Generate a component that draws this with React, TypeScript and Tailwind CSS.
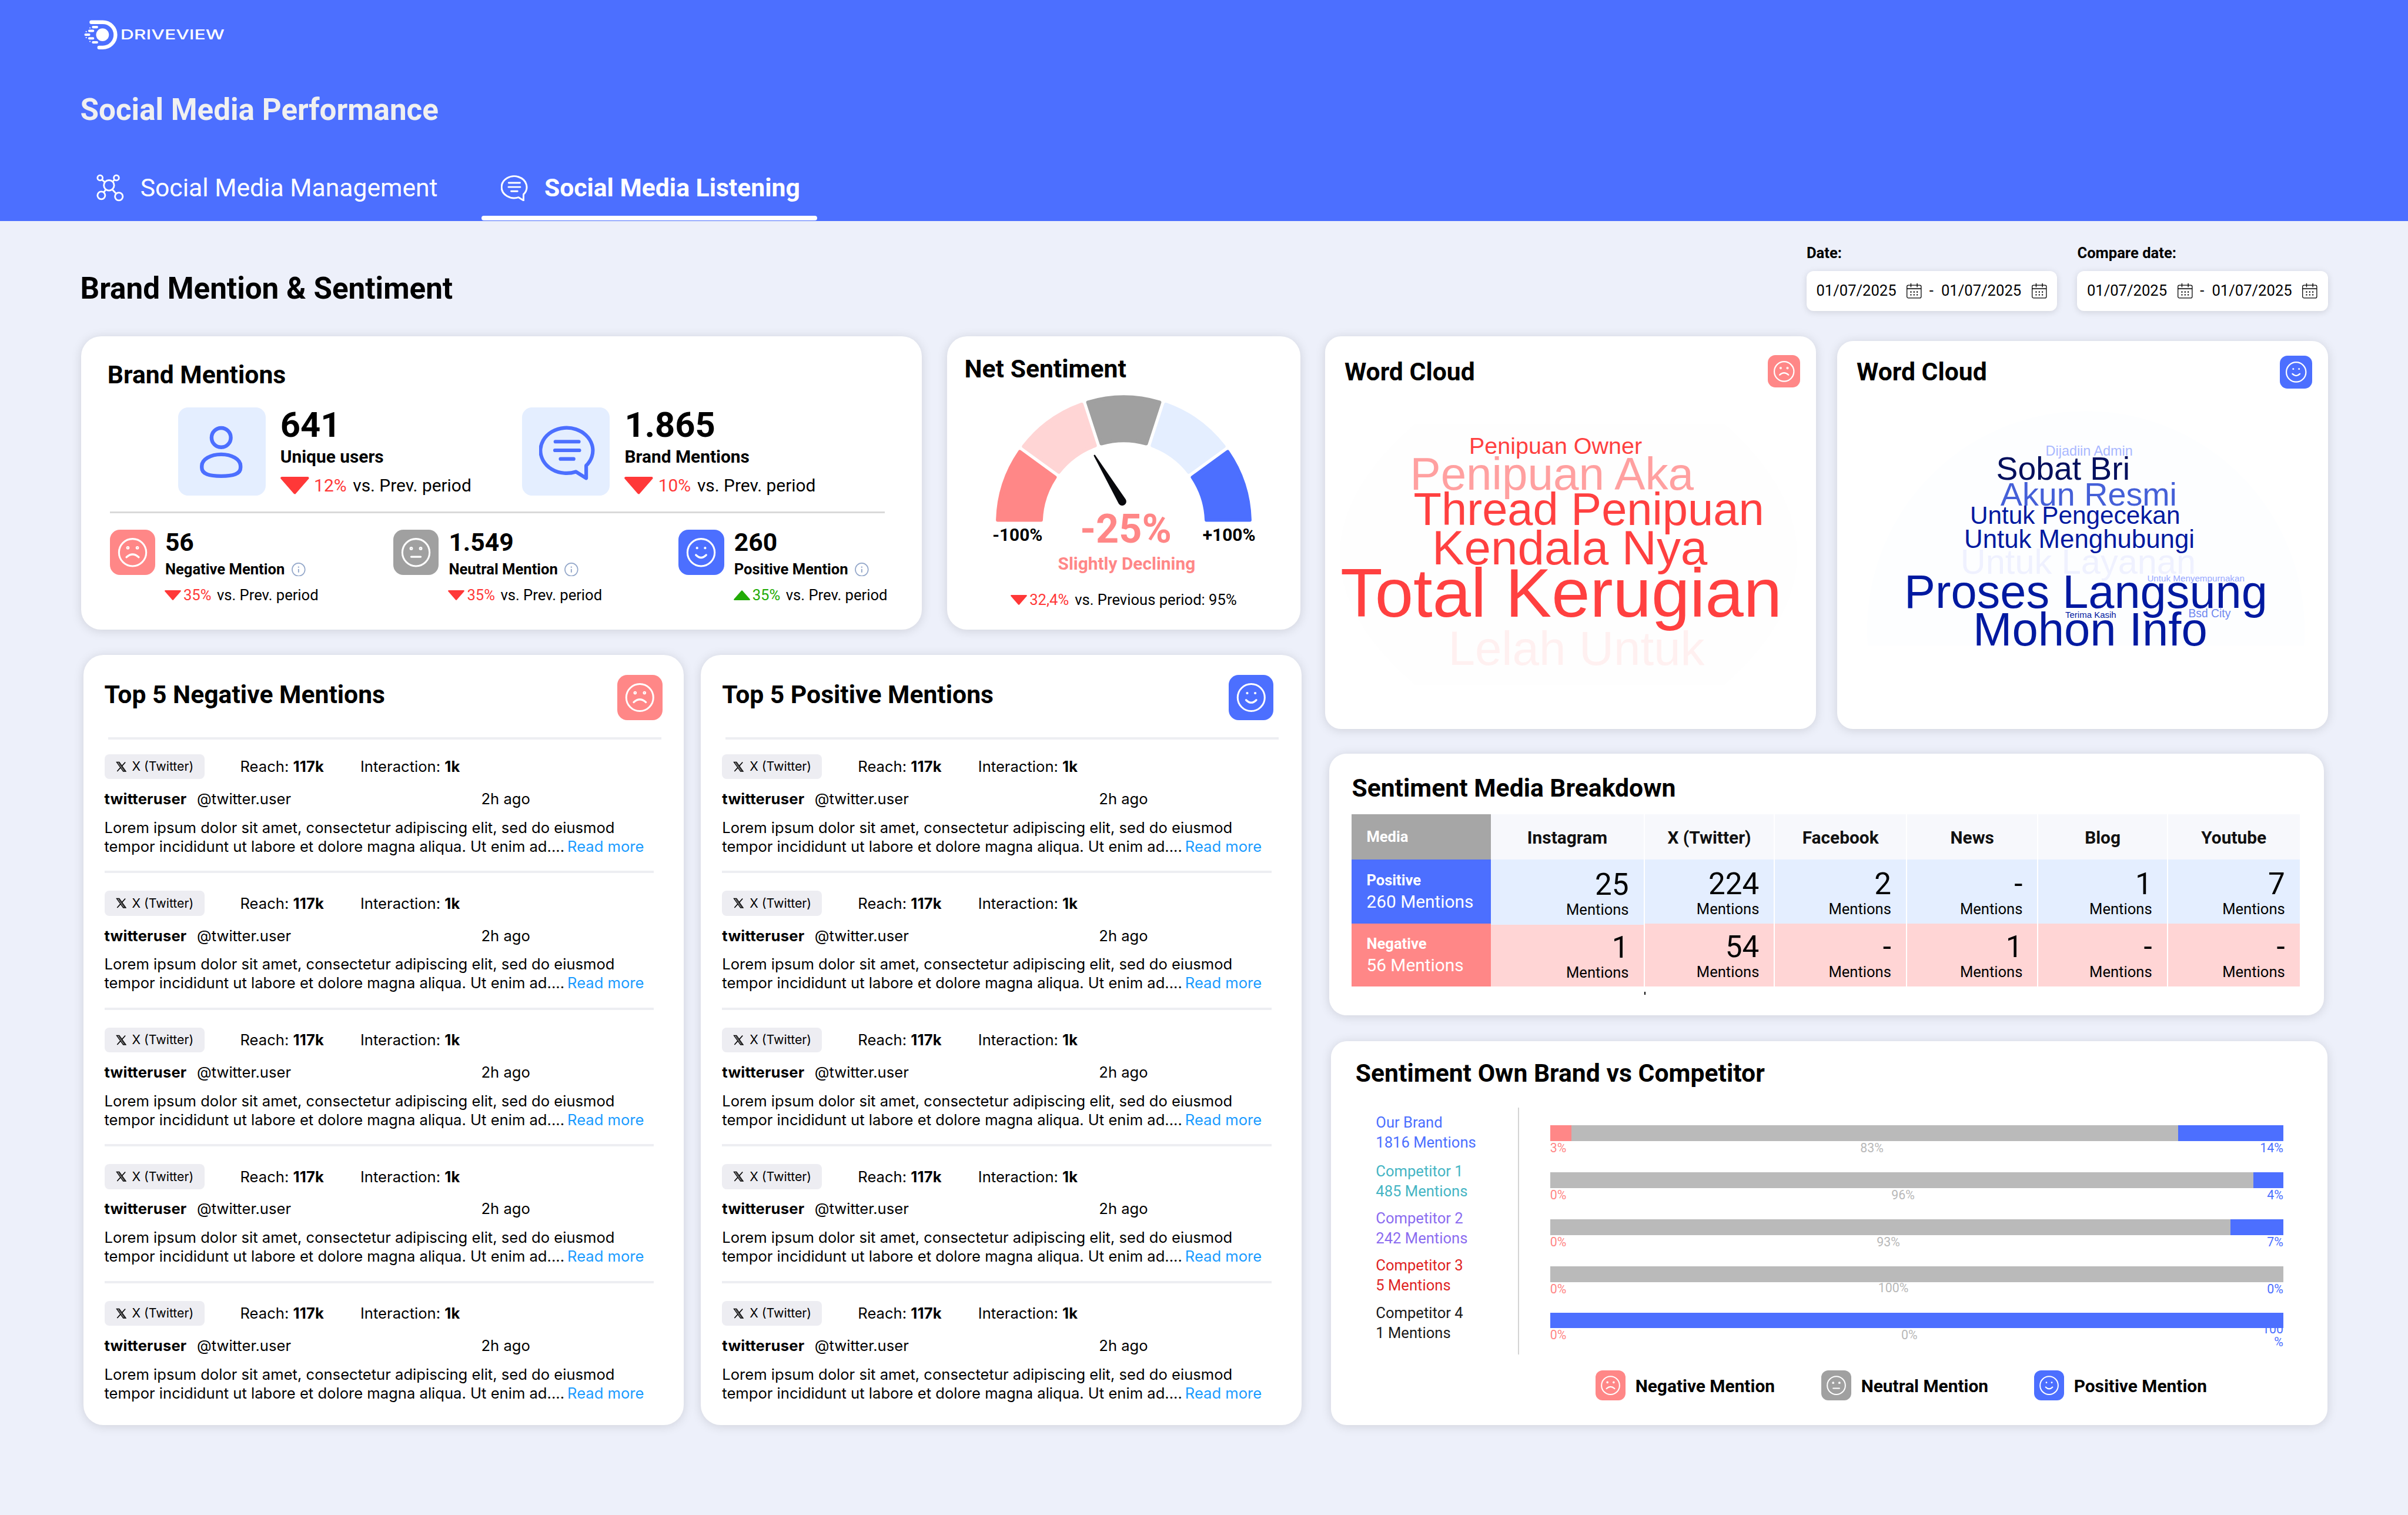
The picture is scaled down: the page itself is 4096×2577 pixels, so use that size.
import React from "react";
import clsx from "clsx";

type Mood = "negative" | "neutral" | "positive";

const LOREM =
  "Lorem ipsum dolor sit amet, consectetur adipiscing elit, sed do eiusmod tempor incididunt ut labore et dolore magna aliqua. Ut enim ad....";

const Logo = () => (
  <svg viewBox="0 0 1080 330" className="mt-[21.3px] -ml-[1.4px] h-[78.2px] w-[256px]" fill="none">
    <path d="M86 70.5H168a91 91 0 0 1 0 182H142" stroke="#fff" strokeWidth="27" strokeLinecap="round" />
    <circle cx="166" cy="161" r="46" fill="#fff" />
    <path
      d="M98 106H126M71 133H98M44 160H70M71 187H98M98 215H126"
      stroke="#fff"
      strokeWidth="17"
      strokeLinecap="round"
    />
    <g fill="#fff">
      <circle cx="76" cy="112" r="4.5" />
      <circle cx="49" cy="139" r="4.5" />
      <circle cx="49" cy="181" r="4.5" />
      <circle cx="76" cy="209" r="4.5" />
    </g>
    <text
      x="294"
      y="194"
      fontSize="97.6"
      fontWeight="500"
      fill="#fff"
      textLength="748"
      lengthAdjust="spacingAndGlyphs"
      className="font-['Inter',sans-serif]"
    >
      DRIVEVIEW
    </text>
  </svg>
);

const NetworkIcon = ({ className }: { className?: string }) => (
  <svg viewBox="0 0 300 300" className={className} fill="none" stroke="#fff" strokeWidth="12">
    <circle cx="60" cy="78" r="18.5" />
    <circle cx="177" cy="78" r="18.5" />
    <circle cx="124" cy="132" r="37" />
    <circle cx="69" cy="204" r="27.5" />
    <circle cx="195" cy="212" r="28" />
    <path d="M73 91 97 111M164 91 150 106M102 162 88 180M147 161 177 193" />
  </svg>
);

const ChatIcon = ({ className }: { className?: string }) => (
  <svg
    viewBox="147 134 403 391"
    className={className}
    fill="none"
    stroke="currentColor"
    strokeWidth="26"
    strokeLinecap="round"
    strokeLinejoin="round"
  >
    <path d="M485 421A188 163 0 1 0 411 465L485 511Z" />
    <path d="M264 249H432M261 311H436M301 373H395" />
  </svg>
);

const UserIcon = ({ className }: { className?: string }) => (
  <svg viewBox="0 0 630 630" className={className} fill="none" stroke="currentColor" strokeWidth="27">
    <circle cx="309" cy="217" r="69" />
    <path d="M309 337c76 0 139 36 139 83v12c0 45-50 61-139 61s-139-16-139-61v-12c0-47 63-83 139-83z" />
  </svg>
);

const CalendarIcon = ({ className }: { className?: string }) => (
  <svg viewBox="0 0 36 36" className={className} fill="none" stroke="#000" strokeWidth="1.8">
    <rect x="1" y="4.5" width="34" height="30.5" rx="3.5" />
    <path d="M1 12.8H35" strokeWidth="2.2" />
    <path d="M10.5 0V9M25.5 0V9" strokeWidth="2" />
    <path d="M9 20.5H12M16.5 20.5H19.5M24 20.5H27M9 27.5H12M16.5 27.5H19.5M24 27.5H27" strokeWidth="3" />
  </svg>
);

const InfoIcon = ({ className }: { className?: string }) => (
  <svg viewBox="0 0 100 100" className={className} fill="none" stroke="#92a6c9">
    <circle cx="50" cy="50" r="46" strokeWidth="7" />
    <circle cx="50" cy="32" r="5" fill="#92a6c9" stroke="none" />
    <path d="M50 49V68" strokeWidth="8" strokeLinecap="round" />
  </svg>
);

const XLogo = ({ className }: { className?: string }) => (
  <svg viewBox="0 0 24 24" className={className} fill="none" stroke="#000">
    <path d="M2 2H7.5L22 22H16.5Z" strokeWidth="1.8" />
    <path d="M6 3.5 19 21" strokeWidth="1.4" />
    <path d="M21 2 13.6 10.2M10.4 13.8 3 22" strokeWidth="2" />
  </svg>
);

const Triangle = ({ up, className }: { up?: boolean; className?: string }) => (
  <svg viewBox="0 0 206 126" className={clsx(up ? "rotate-180 text-[#22ab06]" : "text-[#ff3838]", className)}>
    <path
      d="M10 9H196L103 115Z"
      fill="currentColor"
      stroke="currentColor"
      strokeWidth="18"
      strokeLinejoin="round"
    />
  </svg>
);

const moodBg: Record<Mood, string> = {
  negative: "bg-[#ff8787]",
  neutral: "bg-[#a0a0a0]",
  positive: "bg-[#4c6fff]",
};

const MoodTile = ({ mood, className }: { mood: Mood; className?: string }) => (
  <div className={clsx("shrink-0", moodBg[mood], className)}>
    <svg viewBox="0 0 327 327" className="h-full w-full" fill="none" stroke="#fff" strokeLinecap="round">
      <circle cx="163" cy="164" r="98" strokeWidth="13" />
      {mood === "negative" && (
        <>
          <circle cx="129" cy="130" r="7.5" strokeWidth="9" />
          <circle cx="197" cy="130" r="7.5" strokeWidth="9" />
          <path d="M119 198Q163 158 207 198" strokeWidth="14" />
        </>
      )}
      {mood === "neutral" && (
        <>
          <circle cx="129" cy="135" r="7.5" strokeWidth="10" />
          <circle cx="197" cy="135" r="7.5" strokeWidth="10" />
          <path d="M129 195H197" strokeWidth="14" />
        </>
      )}
      {mood === "positive" && (
        <>
          <circle cx="134" cy="132" r="5" strokeWidth="8" />
          <circle cx="192" cy="132" r="5" strokeWidth="8" />
          <path d="M126 182Q163 220 200 182" strokeWidth="14" />
        </>
      )}
    </svg>
  </div>
);

const Card = ({ className, children }: { className?: string; children: React.ReactNode }) => (
  <section className={clsx("shrink-0 bg-white shadow-[0_2px_18px_rgba(0,0,0,0.13)]", className)}>
    {children}
  </section>
);

const CardTitle = ({ children }: { children: React.ReactNode }) => (
  <h2 className="text-[42.67px] leading-none font-bold">{children}</h2>
);

const DateRange = ({ label }: { label: string }) => (
  <div>
    <p className="text-[25.6px] leading-none font-bold">{label}</p>
    <div className="mt-[17.2px] flex h-[68.3px] w-[426.3px] items-center rounded-xl bg-white pl-[16.5px] text-[25.6px] leading-none shadow-[0_2px_12px_rgba(0,0,0,0.13)]">
      <span>01/07/2025</span>
      <CalendarIcon className="ml-[17.8px] h-[25.6px] w-[25.6px]" />
      <span className="ml-[12.7px]">-</span>
      <span className="ml-[13.2px]">01/07/2025</span>
      <CalendarIcon className="ml-[17.8px] h-[25.6px] w-[25.6px]" />
    </div>
  </div>
);

const Header = () => (
  <header className="flex h-[375.5px] flex-col bg-[#4c6fff] pl-[136.5px] text-white">
    <Logo />
    <h1 className="mt-[61.8px] text-[51.2px] leading-none font-bold text-[#f0f0f0]">
      Social Media Performance
    </h1>
    <nav className="mt-[71.9px] flex text-[42.67px] leading-none">
      <a className="flex h-[71.1px] w-[682.7px] items-center pl-[19.9px]">
        <NetworkIcon className="h-[71.1px] w-[71.1px]" />
        <span className="ml-[11.2px] pb-[2px]">Social Media Management</span>
      </a>
      <a className="w-[571.2px] font-bold">
        <div className="flex h-[71.1px] items-center pl-[32.8px]">
          <ChatIcon className="h-[44.5px] w-[45.9px]" />
          <span className="ml-[28px] pb-[2px]">Social Media Listening</span>
        </div>
        <div className="mt-[11.3px] h-[8.7px] rounded bg-white" />
      </a>
    </nav>
  </header>
);

const BigStat = ({
  icon,
  value,
  label,
  change,
}: {
  icon: React.ReactNode;
  value: string;
  label: string;
  change: string;
}) => (
  <div className="flex w-[585.7px]">
    <div className="flex h-[149.3px] w-[149.3px] items-center justify-center rounded-[17px] bg-[#e4eeff] text-[#4c6fff]">
      {icon}
    </div>
    <div className="ml-[25px] pt-[1.1px]">
      <p className="text-[59.7px] leading-none font-bold">{value}</p>
      <p className="mt-[8px] text-[29.87px] leading-none font-bold">{label}</p>
      <div className="mt-[18.9px] flex items-center text-[29.87px] leading-none">
        <Triangle className="h-[29.9px] w-[48.8px]" />
        <span className="ml-[8.5px] text-[#ff3838]">{change}</span>
        <span className="ml-[10.7px]">vs. Prev. period</span>
      </div>
    </div>
  </div>
);

const smallStats: { mood: Mood; value: string; label: string; up?: boolean; width: string }[] = [
  { mood: "negative", value: "56", label: "Negative Mention", width: "w-[482.5px]" },
  { mood: "neutral", value: "1.549", label: "Neutral Mention", width: "w-[485.3px]" },
  { mood: "positive", value: "260", label: "Positive Mention", up: true, width: "w-[400px]" },
];

const BrandMentions = () => (
  <Card className="h-[499.3px] w-[1430px] rounded-[34px] pt-[44.5px] pl-[44px]">
    <div className="pl-[0.8px]">
      <CardTitle>Brand Mentions</CardTitle>
    </div>
    <div className="mt-[34.4px] flex pl-[120.5px]">
      <BigStat icon={<UserIcon className="h-full w-full" />} value="641" label="Unique users" change="12%" />
      <BigStat
        icon={<ChatIcon className="mt-[5px] ml-[3px] h-[92.7px] w-[95.5px]" />}
        value="1.865"
        label="Brand Mentions"
        change="10%"
      />
    </div>
    <div className="mt-[27.9px] ml-[4.6px] h-[2.3px] w-[1318.3px] bg-[#d9d9d9]" />
    <div className="mt-[28.1px] ml-[4.6px] flex">
      {smallStats.map((s) => (
        <div key={s.label} className={clsx("flex", s.width)}>
          <MoodTile mood={s.mood} className="h-[77.3px] w-[77.3px] overflow-hidden rounded-[17px]" />
          <div className="ml-[17px]">
            <p className="text-[42.67px] leading-none font-bold">{s.value}</p>
            <div className="mt-[12.2px] flex items-center text-[25.6px] leading-none font-bold">
              {s.label}
              <InfoIcon className="ml-[11.6px] h-[23.7px] w-[23.7px]" />
            </div>
            <div className="mt-[18.7px] flex items-center text-[25.6px] leading-none">
              <Triangle up={s.up} className="-ml-[1px] h-[17.1px] w-[28px]" />
              <span className={clsx("ml-[4px]", s.up ? "text-[#22ab06]" : "text-[#ff3838]")}>35%</span>
              <span className="ml-[9.5px]">vs. Prev. period</span>
            </div>
          </div>
        </div>
      ))}
    </div>
  </Card>
);

const GAUGE = { cx: 311.5, cy: 328, outer: 214.5, inner: 140.7, inset: 5.6 };
const gaugeColors = ["#ff8787", "#ffd5d5", "#a0a0a0", "#e4eeff", "#4c6fff"];

// One 36° slice, pulled in on every side so that the round stroke fills the corners
function slicePath(index: number) {
  const { cx, cy, outer, inner, inset } = GAUGE;
  const step = Math.PI / 5;
  const point = (r: number, a: number) => `${(cx - r * Math.cos(a)).toFixed(2)} ${(cy - r * Math.sin(a)).toFixed(2)}`;
  const start = index * step;
  const end = start + step;
  const o = Math.asin(inset / outer);
  const i = Math.asin(inset / inner);
  return `M${point(outer, start + o)}A${outer} ${outer} 0 0 1 ${point(outer, end - o)}L${point(inner, end - i)}A${inner} ${inner} 0 0 0 ${point(inner, start + i)}Z`;
}

const NetSentiment = () => (
  <Card className="ml-[42.7px] h-[499.3px] w-[601.6px] rounded-[34px] pt-[34.7px]">
    <div className="pl-[29.8px]">
      <CardTitle>Net Sentiment</CardTitle>
    </div>
    <svg viewBox="90 106 443 222" className="mt-[18.7px] ml-[79.3px] h-[222px] w-[443px]">
      {gaugeColors.map((color, i) => (
        <path key={color} d={slicePath(i)} fill={color} stroke={color} strokeWidth="6" strokeLinejoin="round" />
      ))}
      <path d="M260.6 213.6 302.8 294.6A7 7 0 1 0 314.9 287.4L263 212.2A1.4 1.4 0 0 0 260.6 213.6Z" fill="#08090d" />
    </svg>
    <div className="-mt-[23.4px] flex pl-[77.5px] leading-none font-bold">
      <span className="w-[149px] pt-[28.5px] text-[29.87px]">-100%</span>
      <span className="w-[208.6px] text-[68.27px] text-[#ff8787]">-25%</span>
      <span className="pt-[28.5px] text-[29.87px]">+100%</span>
    </div>
    <p className="mt-[9.6px] pl-[9.8px] text-center text-[29.87px] leading-none font-bold text-[#ff8787]">
      Slightly Declining
    </p>
    <div className="mt-[33.7px] flex items-center pl-[108.5px] text-[25.6px] leading-none">
      <Triangle className="h-[17.1px] w-[28px]" />
      <span className="ml-[4px] text-[#ff3838]">32,4%</span>
      <span className="ml-[10px]">vs. Previous period: 95%</span>
    </div>
  </Card>
);

const Mention = ({ last }: { last?: boolean }) => (
  <article className="font-['Inter',sans-serif] text-[25.6px] leading-none">
    <div className="flex h-[42.5px] items-center">
      <div className="flex h-full w-[170px] items-center rounded-lg bg-[#ededf2] pl-[19px] text-[21.33px]">
        <XLogo className="h-[18.5px] w-[18.5px]" />
        <span className="ml-[9.5px]">X (Twitter)</span>
      </div>
      <span className="ml-[61px] w-[204.5px]">
        Reach: <b className="font-bold tracking-[0.2px]">117k</b>
      </span>
      <span>
        Interaction: <b className="font-bold tracking-[0.2px]">1k</b>
      </span>
    </div>
    <div className="mt-[20.7px] flex">
      <span className="w-[157.5px] font-bold tracking-[0.2px]">twitteruser</span>
      <span className="w-[483.5px]">@twitter.user</span>
      <span>2h ago</span>
    </div>
    <p className="mt-[20.2px] w-[934px] leading-[31.9px]">
      {LOREM}
      <a className="ml-[5px] text-[#1a9bff]">Read more</a>
    </p>
    {!last && <div className="mt-[25.6px] mb-[30px] h-[4.1px] w-[934.3px] bg-[#edeef2]" />}
  </article>
);

const TopMentions = ({ title, mood }: { title: string; mood: Mood }) => (
  <Card className="h-[1310.6px] w-[1021.5px] rounded-[34px] pt-[34.3px] pl-[36px]">
    <div className={clsx("flex items-start justify-between", mood === "positive" ? "pr-[47.5px]" : "pr-[36.5px]")}>
      <div className="pt-[11.9px]">
        <CardTitle>{title}</CardTitle>
      </div>
      <MoodTile mood={mood} className="h-[76.8px] w-[76.8px] rounded-[17px]" />
    </div>
    <div className="mt-[29.3px] mb-[24.8px] ml-[6px] h-[4.1px] w-[941px] bg-[#edeef2]" />
    {[0, 1, 2, 3, 4].map((i) => (
      <Mention key={i} last={i === 4} />
    ))}
  </Card>
);

type Word = { text: string; x: number; y: number; size: number; color: string };

const negativeWords: Word[] = [
  { text: "Lelah Untuk", x: 209.5, y: 559.4, size: 81.7, color: "#fff0f0" },
  { text: "Penipuan Owner", x: 245, y: 200.8, size: 39.5, color: "#ff4040" },
  { text: "Penipuan Aka", x: 144.5, y: 261.2, size: 78.2, color: "#ffa0a0" },
  { text: "Thread Penipuan", x: 150.6, y: 322.1, size: 77.7, color: "#ff4040" },
  { text: "Kendala Nya", x: 182, y: 388.3, size: 81.8, color: "#ff4040" },
  { text: "Total Kerugian", x: 26, y: 477.2, size: 117.5, color: "#ff4040" },
];

const positiveWords: Word[] = [
  { text: "Untuk Layanan", x: 209.8, y: 395.6, size: 59.5, color: "#eff1ff" },
  { text: "Dijadiin Admin", x: 354.6, y: 194.7, size: 23.4, color: "#a9b8ff" },
  { text: "Sobat Bri", x: 270.5, y: 235.6, size: 55.3, color: "#000f5c" },
  { text: "Akun Resmi", x: 277.8, y: 279.6, size: 55.7, color: "#4560d8" },
  { text: "Untuk Pengecekan", x: 226, y: 310.7, size: 42.3, color: "#0019a0" },
  { text: "Untuk Menghubungi", x: 216, y: 351.1, size: 43.8, color: "#0019a0" },
  { text: "Untuk Menyempurnakan", x: 527.4, y: 408.9, size: 15.2, color: "#99a9ff" },
  { text: "Proses Langsung", x: 114, y: 453.8, size: 79.4, color: "#0019a0" },
  { text: "Bsd City", x: 597.5, y: 469.4, size: 19.3, color: "#6f87f0" },
  { text: "Mohon Info", x: 231, y: 517.8, size: 79.7, color: "#0019a0" },
  { text: "Terima Kasih", x: 388, y: 470.7, size: 15, color: "#0019a0" },
];

const Words = ({ words }: { words: Word[] }) => (
  <>
    {words.map((w) => (
      <text key={w.text} x={w.x} y={w.y} fontSize={w.size} fill={w.color}>
        {w.text}
      </text>
    ))}
  </>
);

const WordClouds = () => (
  <div className="flex items-end">
    <Card className="h-[667.9px] w-[834.6px] rounded-[27px] pt-[32px]">
      <div className="flex items-start justify-between pr-[26.8px] pl-[32.5px]">
        <div className="pt-[7.1px]">
          <CardTitle>Word Cloud</CardTitle>
        </div>
        <MoodTile mood="negative" className="h-[55.6px] w-[55.6px] rounded-[13px]" />
      </div>
      <svg
        viewBox="0 87.6 834.6 560"
        className="h-[560px] w-[834.6px] font-['Liberation_Sans',Arial,sans-serif]"
      >
        <path d="M152 150H680Q803 260 803 372T680 593H152Q25 483 25 372T152 150Z" fill="#fefefe" />
        <Words words={negativeWords} />
      </svg>
    </Card>
    <Card className="ml-[36.5px] h-[659.1px] w-[834.5px] rounded-[27px] pt-[24.9px]">
      <div className="flex items-start justify-between pr-[26.7px] pl-[32.5px]">
        <div className="pt-[5.5px]">
          <CardTitle>Word Cloud</CardTitle>
        </div>
        <MoodTile mood="positive" className="h-[55.6px] w-[55.6px] rounded-[13px]" />
      </div>
      <svg
        viewBox="0 80.5 834.5 560"
        className="h-[560px] w-[834.5px] font-['Liberation_Sans',Arial,sans-serif]"
      >
        <path d="M52 518A372 372 0 1 1 794 518Z" fill="#fdfeff" />
        <Words words={positiveWords} />
      </svg>
    </Card>
  </div>
);

const media = [
  { name: "Instagram", positive: "25", negative: "1", width: "w-[261.2px]" },
  { name: "X (Twitter)", positive: "224", negative: "54", width: "w-[221.8px]" },
  { name: "Facebook", positive: "2", negative: "-", width: "w-[224.6px]" },
  { name: "News", positive: "-", negative: "1", width: "w-[223.5px]" },
  { name: "Blog", positive: "1", negative: "-", width: "w-[220.2px]" },
  { name: "Youtube", positive: "7", negative: "-", width: "w-[224.1px]" },
];

const MediaCell = ({ value, className }: { value: string; className: string }) => (
  <div className={clsx("pr-[25px] text-right leading-none", className)}>
    <p className="text-[51.2px]">{value}</p>
    <p className="mt-[4.8px] text-[25.6px]">Mentions</p>
  </div>
);

const MediaBreakdown = () => (
  <Card className="mt-[42.7px] ml-[7px] h-[445.1px] w-[1692px] rounded-[29px] pt-[36.4px] pl-[38px]">
    <CardTitle>Sentiment Media Breakdown</CardTitle>
    <div className="mt-[23.7px] flex">
      <div className="w-[237px] leading-none text-white">
        <div className="flex h-[77.2px] items-center bg-[#a6a6a6] pl-[25px] text-[25.6px] font-bold">Media</div>
        <div className="h-[108.8px] bg-[#4c6fff] pt-[22.5px] pl-[25px]">
          <p className="text-[25.6px] font-bold">Positive</p>
          <p className="mt-[8.8px] text-[29.87px]">260 Mentions</p>
        </div>
        <div className="h-[107px] bg-[#ff8787] pt-[21.5px] pl-[25px]">
          <p className="text-[25.6px] font-bold">Negative</p>
          <p className="mt-[8.8px] text-[29.87px]">56 Mentions</p>
        </div>
      </div>
      {media.map((m, i) => (
        <div key={m.name} className={clsx(m.width, i < media.length - 1 && "border-r-2 border-white")}>
          <div className="flex h-[77.2px] items-center justify-center bg-[#f7f8fc] pt-[2px] text-[29.87px] leading-none font-bold text-[#111]">
            {m.name}
          </div>
          <MediaCell
            value={m.positive}
            className={i === 0 ? "h-[110.9px] bg-[#e4eeff] pt-[17px]" : "h-[108.8px] bg-[#e4eeff] pt-[15.8px]"}
          />
          <MediaCell
            value={m.negative}
            className={i === 0 ? "h-[104.9px] bg-[#ffd5d5] pt-[13.4px]" : "h-[107px] bg-[#ffd5d5] pt-[14.3px]"}
          />
        </div>
      ))}
    </div>
    <div className="mt-[8.8px] ml-[497.5px] h-[5.5px] w-[2px] bg-black" />
  </Card>
);

const brands = [
  { name: "Our Brand", total: 1816, color: "text-[#4c6fff]", pct: [3, 83, 14], bar: [36.5, 1031.4, 179.2], mid: 527.9 },
  { name: "Competitor 1", total: 485, color: "text-[#45b5c4]", pct: [0, 96, 4], bar: [0, 1196.2, 50.9], mid: 581 },
  { name: "Competitor 2", total: 242, color: "text-[#8b6cf0]", pct: [0, 93, 7], bar: [0, 1157.5, 89.6], mid: 555.9 },
  { name: "Competitor 3", total: 5, color: "text-[#e02424]", pct: [0, 100, 0], bar: [0, 1247.1, 0], mid: 558.5 },
  { name: "Competitor 4", total: 1, color: "text-[#1a1a1a]", pct: [0, 0, 100], bar: [0, 0, 1247.1], mid: 597.6 },
];

const legend: { mood: Mood; label: string; width: string }[] = [
  { mood: "negative", label: "Negative Mention", width: "w-[384px]" },
  { mood: "neutral", label: "Neutral Mention", width: "w-[362px]" },
  { mood: "positive", label: "Positive Mention", width: "w-[320px]" },
];

const Competitors = () => (
  <Card className="mt-[43.5px] ml-[9.4px] h-[653.4px] w-[1695.2px] rounded-[27px] pt-[33.3px]">
    <div className="pl-[42px]">
      <CardTitle>Sentiment Own Brand vs Competitor</CardTitle>
    </div>
    <div className="mt-[37.2px] flex h-[420px] pl-[76.5px]">
      <div className="w-[241.5px] pt-[8.2px] text-[25.6px] leading-[34.1px]">
        {brands.map((b, i) => (
          <div key={b.name} className={clsx("h-[80.2px]", i === 0 && "mb-[2.6px]", b.color)}>
            <p>{b.name}</p>
            <p>{b.total} Mentions</p>
          </div>
        ))}
      </div>
      <div className="w-[2px] bg-[#d4d4d4]" />
      <div className="ml-[53px] w-[1247.1px] pt-[30.4px] text-[21.33px] leading-none">
        {brands.map((b, i) => (
          <div key={b.name} className={i === 3 ? "h-[78.5px]" : "h-[80px]"}>
            <div className="relative z-10 flex h-[26.4px]">
              <div className="bg-[#ff8787]" style={{ width: b.bar[0] }} />
              <div className="bg-[#bababa]" style={{ width: b.bar[1] }} />
              <div className="bg-[#4c6fff]" style={{ width: b.bar[2] }} />
            </div>
            <div className="flex">
              <span className="w-0 pt-[1px] text-[#ff8787]">{b.pct[0]}%</span>
              <span className={clsx("text-[#b8b8b8]", i === 3 ? "-mt-px" : "pt-[1px]")} style={{ marginLeft: b.mid - 0.5 }}>
                {b.pct[1]}%
              </span>
              {b.pct[2] === 100 ? (
                <span className="-mt-[9px] ml-auto w-[36px] text-right text-[#4c6fff]">
                  100
                  <br />%
                </span>
              ) : (
                <span className="ml-auto pt-[1px] text-[#4c6fff]">{b.pct[2]}%</span>
              )}
            </div>
          </div>
        ))}
      </div>
    </div>
    <div className="mt-[27px] flex pl-[450.2px]">
      {legend.map((l) => (
        <div key={l.label} className={clsx("flex items-center text-[29.87px] leading-none font-bold", l.width)}>
          <MoodTile mood={l.mood} className="h-[51.2px] w-[51.2px] rounded-xl" />
          <span className="ml-[16.5px] pt-[2px]">{l.label}</span>
        </div>
      ))}
    </div>
  </Card>
);

const App = () => (
  <div className="h-[2577px] w-[4096px] overflow-hidden bg-[#edf0fa] font-['Roboto',sans-serif] text-black">
    <Header />
    <main className="pt-[42.5px]">
      <div className="flex h-[111.1px] justify-between pr-[136.3px] pl-[136.5px]">
        <h2 className="pt-[46.5px] text-[51.2px] leading-none font-bold">Brand Mention &amp; Sentiment</h2>
        <div className="flex gap-[34.2px]">
          <DateRange label="Date:" />
          <DateRange label="Compare date:" />
        </div>
      </div>
      <div className="mt-[42.6px] flex pl-[138px]">
        <div className="w-[2116.4px] shrink-0">
          <div className="flex">
            <BrandMentions />
            <NetSentiment />
          </div>
          <div className="mt-[42.6px] ml-[3.5px] flex gap-[29.3px]">
            <TopMentions title="Top 5 Negative Mentions" mood="negative" />
            <TopMentions title="Top 5 Positive Mentions" mood="positive" />
          </div>
        </div>
        <div className="w-[1706px] shrink-0">
          <WordClouds />
          <MediaBreakdown />
          <Competitors />
        </div>
      </div>
    </main>
  </div>
);

export default App;
